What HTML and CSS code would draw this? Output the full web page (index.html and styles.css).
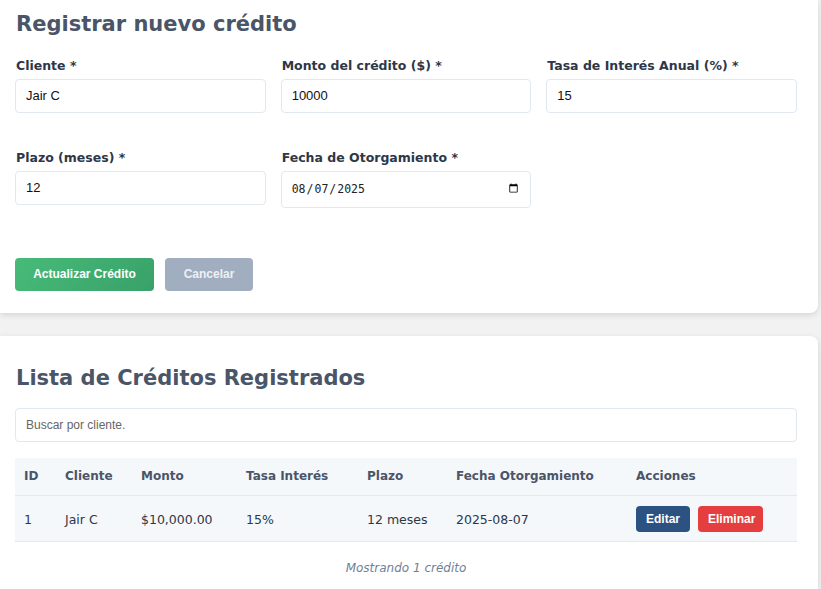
FILE: index.html
```html
<!DOCTYPE html>
<html lang="es">
<head>
<meta charset="utf-8">
<title>Créditos</title>
<link rel="stylesheet" href="styles.css">
</head>
<body>
<div class="page">
  <section class="card card-form">
    <h2 class="card-title">Registrar nuevo crédito</h2>
    <form class="form">
      <div class="form-grid">
        <div class="form-group">
          <label class="label">Cliente *</label>
          <input class="input" type="text" value="Jair C">
        </div>
        <div class="form-group">
          <label class="label">Monto del crédito ($) *</label>
          <input class="input" type="text" value="10000">
        </div>
        <div class="form-group">
          <label class="label">Tasa de Interés Anual (%) *</label>
          <input class="input" type="text" value="15">
        </div>
        <div class="form-group">
          <label class="label">Plazo (meses) *</label>
          <input class="input" type="text" value="12">
        </div>
        <div class="form-group">
          <label class="label">Fecha de Otorgamiento *</label>
          <input class="input input-date" type="date" value="2025-08-07">
        </div>
      </div>
      <div class="actions">
        <button type="button" class="btn btn-primary">Actualizar Crédito</button>
        <button type="button" class="btn btn-cancel">Cancelar</button>
      </div>
    </form>
  </section>

  <section class="card card-list">
    <h2 class="card-title">Lista de Créditos Registrados</h2>
    <input class="input search" type="text" placeholder="Buscar por cliente.">
    <table class="table">
      <colgroup>
        <col class="c-id"><col class="c-cliente"><col class="c-monto"><col class="c-tasa"><col class="c-plazo"><col class="c-fecha"><col class="c-acc">
      </colgroup>
      <thead>
        <tr>
          <th>ID</th><th>Cliente</th><th>Monto</th><th>Tasa Interés</th><th>Plazo</th><th>Fecha Otorgamiento</th><th>Acciones</th>
        </tr>
      </thead>
      <tbody>
        <tr>
          <td>1</td><td>Jair C</td><td>$10,000.00</td><td>15%</td><td>12 meses</td><td>2025-08-07</td>
          <td class="cell-actions"><button type="button" class="btn-sm btn-edit">Editar</button><button type="button" class="btn-sm btn-delete">Eliminar</button></td>
        </tr>
      </tbody>
    </table>
    <p class="count">Mostrando 1 crédito</p>
  </section>
</div>
</body>
</html>
```

FILE: styles.css
```css
* { box-sizing: border-box; }

html, body {
  margin: 0;
  padding: 0;
  background: #f2f2f2;
  font-family: "DejaVu Sans", Verdana, sans-serif;
  overflow: hidden;
}

.page {
  width: 818px;
}

.card {
  background: #ffffff;
  padding: 12px 21px 22px 15px;
  box-shadow: 0 2px 6px rgba(0, 0, 0, 0.12);
}

.card-form {
  border-radius: 0 0 8px 0;
}

.card-list {
  margin-top: 23px;
  padding-top: 30px;
  border-radius: 0 8px 0 0;
  height: 253px;
}

.card-title {
  margin: 0 0 20px 1px;
  font-size: 21px;
  font-weight: bold;
  color: #4a5568;
  line-height: 25.6px;
}

.card-list .card-title {
  margin-bottom: 17px;
}

.form-grid {
  display: grid;
  grid-template-columns: repeat(3, 1fr);
  column-gap: 15px;
  row-gap: 15px;
  align-items: start;
}

.form-group {
  display: flex;
  flex-direction: column;
  margin-bottom: 22px;
}

.label {
  font-size: 12.5px;
  font-weight: bold;
  color: #2d3748;
  line-height: 15px;
  margin-bottom: 6px;
  padding-left: 1px;
}

.input {
  height: 34px;
  width: 100%;
  padding: 0 10px;
  border: 1px solid #e2e8f0;
  border-radius: 4px;
  font-family: "Liberation Sans", Arial, sans-serif;
  font-size: 13px;
  color: #111;
  background: #fff;
  outline: none;
}

.input-date {
  height: 37px;
  padding: 0 9px;
  font-family: "DejaVu Sans Mono", monospace;
  font-size: 11.5px;
  color: #222;
}

.actions {
  display: flex;
  gap: 11px;
  margin-top: 28px;
}

.btn {
  height: 33px;
  border: none;
  border-radius: 4px;
  font-family: "Liberation Sans", Arial, sans-serif;
  font-size: 12px;
  font-weight: bold;
  color: #ffffff;
  padding: 0 18px;
}

.btn-primary {
  background: linear-gradient(135deg, #48bb78, #38a169);
  width: 139px;
}

.btn-cancel {
  background: #a0aec0;
  color: #edf0f4;
  width: 88px;
}

.search {
  display: block;
  margin-bottom: 16px;
  font-size: 12px;
}

.search::placeholder {
  color: #666;
}

.table {
  width: 100%;
  border-collapse: collapse;
  table-layout: fixed;
  font-size: 12.5px;
}

.c-id { width: 41px; }
.c-cliente { width: 76px; }
.c-monto { width: 105px; }
.c-tasa { width: 121px; }
.c-plazo { width: 89px; }
.c-fecha { width: 180px; }
.c-acc { width: auto; }

.table th {
  background: #f5f8fb;
  text-align: left;
  font-size: 12px;
  font-weight: bold;
  color: #4a5568;
  padding: 11px 9px;
  line-height: 15px;
  border-bottom: 1px solid #e2e8f0;
  white-space: nowrap;
}

.table td {
  background: #f5f8fb;
  color: #2d3748;
  padding: 10px 9px 9px;
  line-height: 15px;
  border-bottom: 1px solid #e2e8f0;
  vertical-align: middle;
  white-space: nowrap;
}

.btn-sm {
  height: 26px;
  border: none;
  border-radius: 4px;
  font-family: "Liberation Sans", Arial, sans-serif;
  font-size: 12px;
  font-weight: bold;
  color: #fff;
  padding: 0 10px;
  vertical-align: middle;
}

.btn-edit {
  background: #2c5282;
  width: 54px;
  margin-right: 8px;
}

.btn-delete {
  background: #e53e3e;
  width: 65px;
}

.count {
  margin: 19px 0 0;
  text-align: center;
  font-size: 12px;
  font-style: italic;
  color: #718096;
}
```
